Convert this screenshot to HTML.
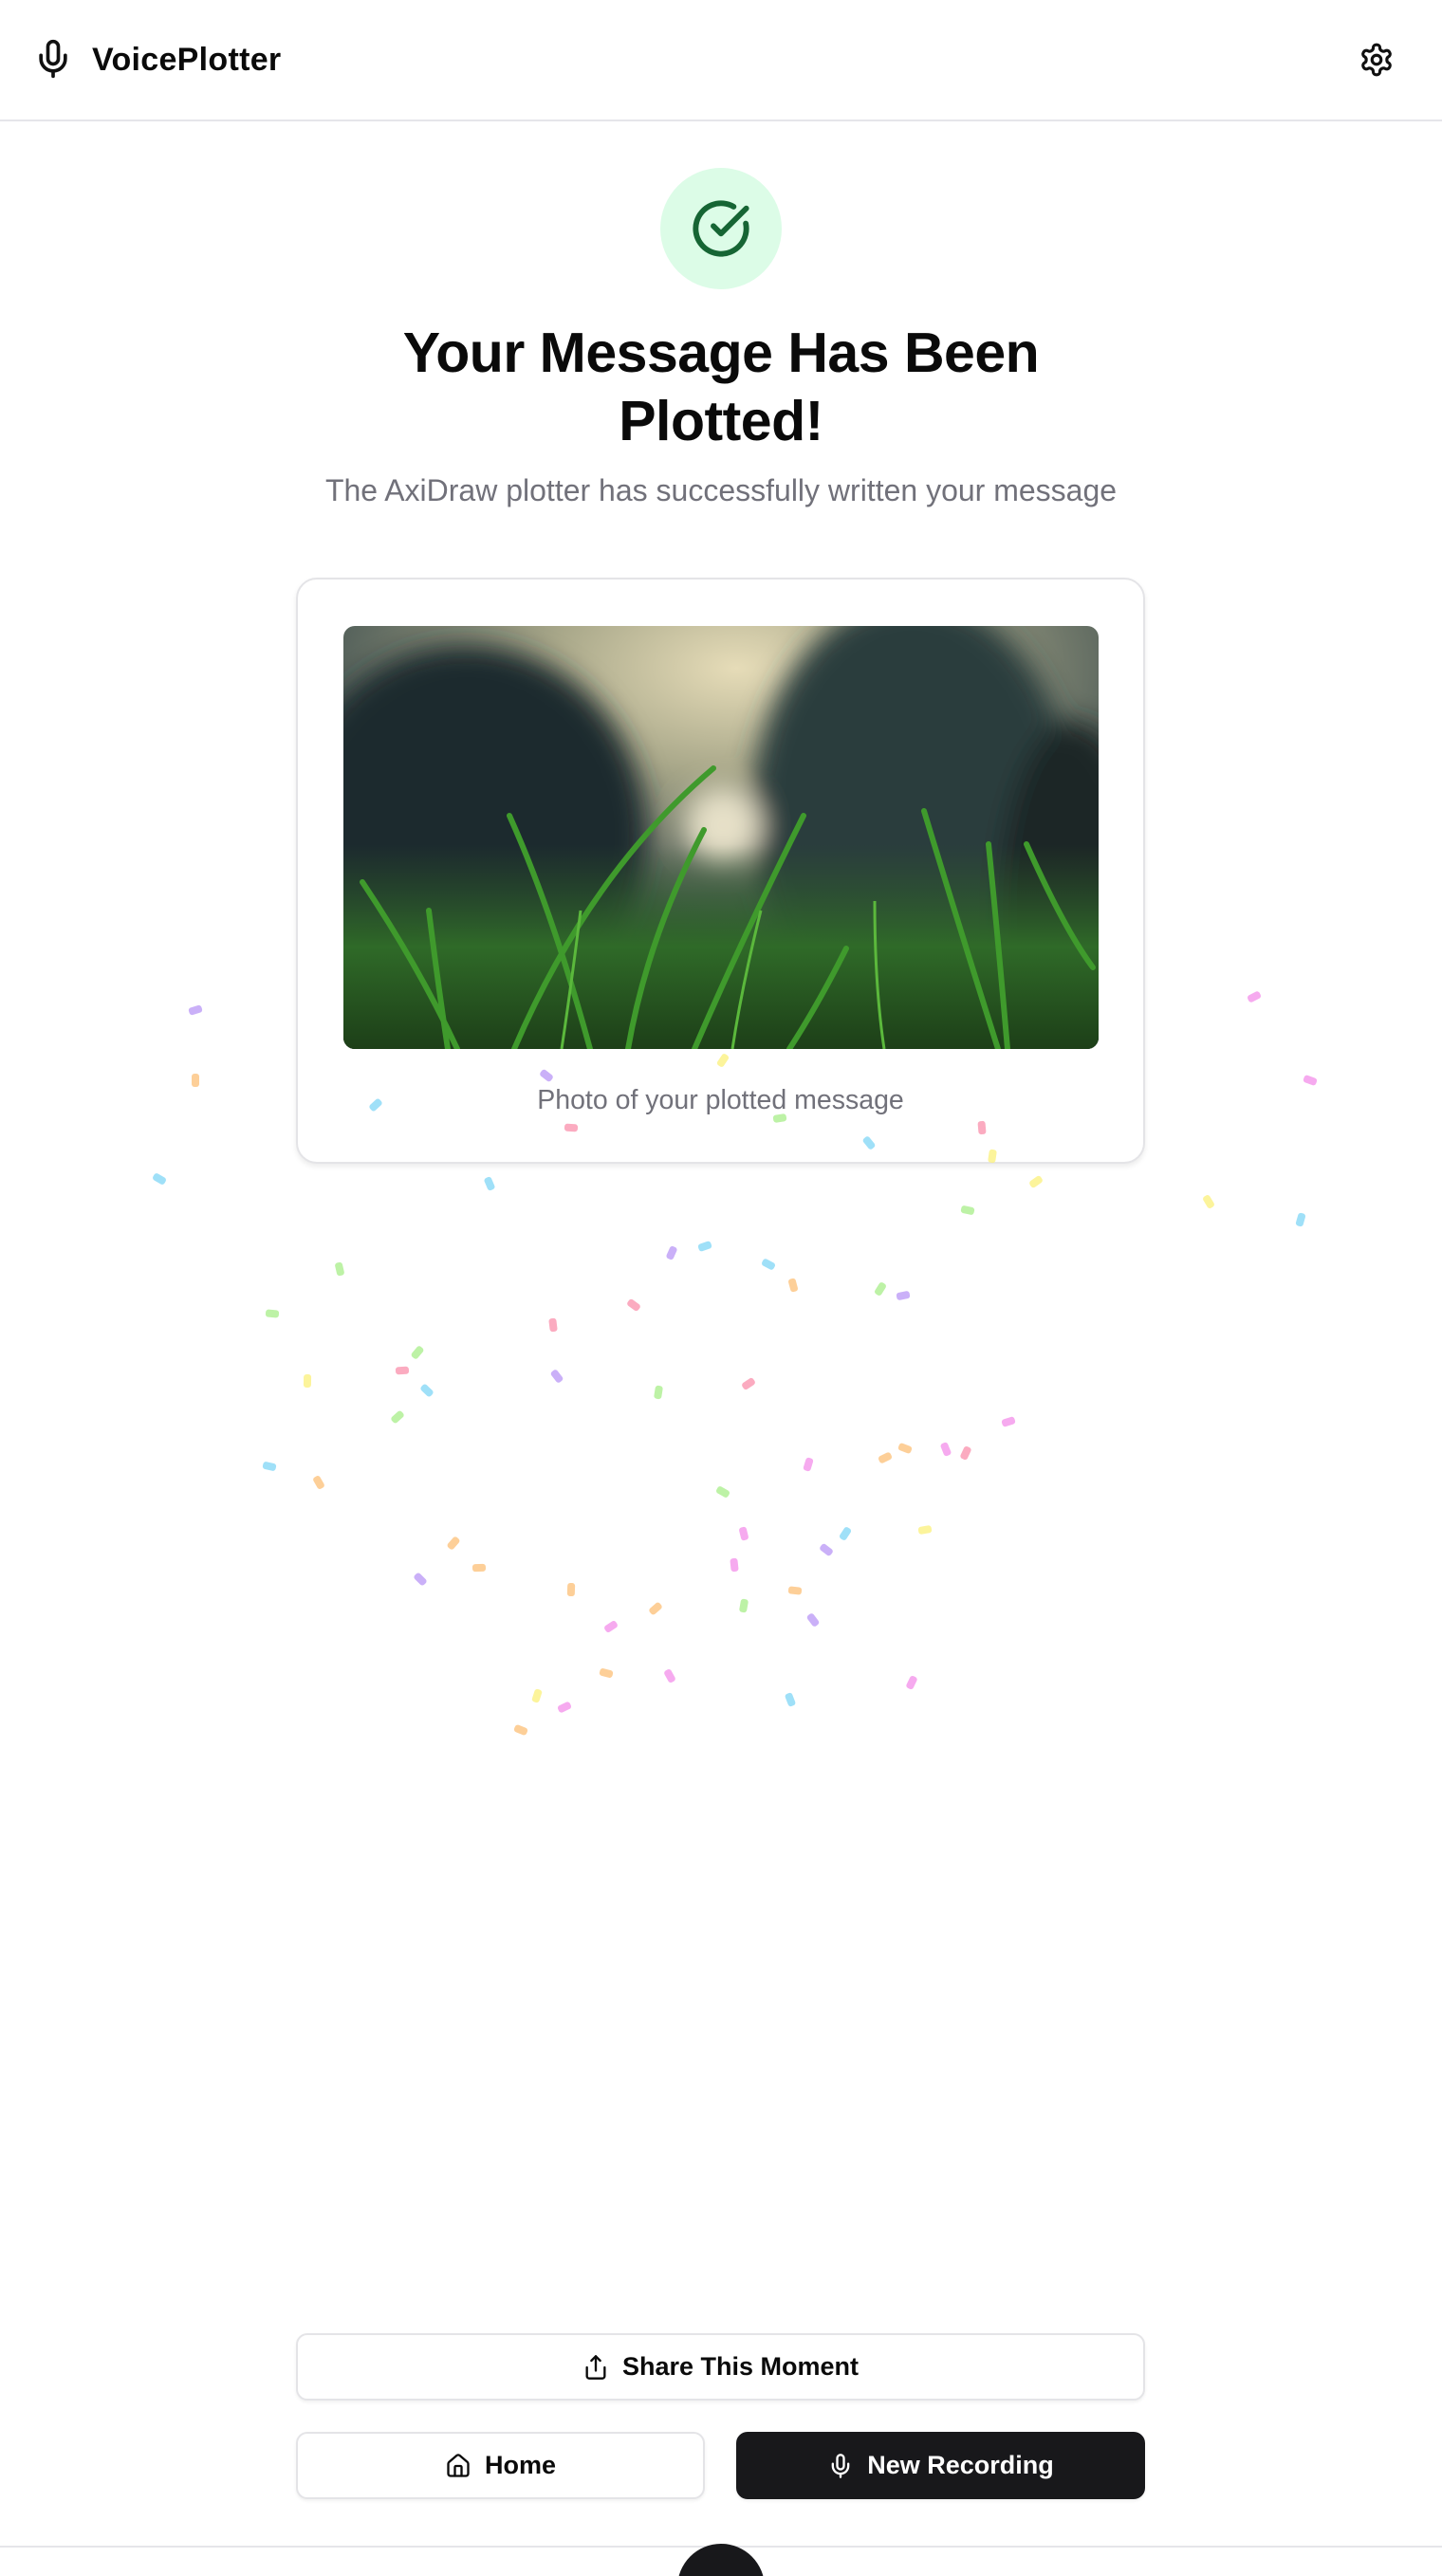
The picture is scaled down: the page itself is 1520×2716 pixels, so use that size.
<!DOCTYPE html>
<html><head><meta charset="utf-8"><style>
*{box-sizing:border-box;margin:0;padding:0}
html,body{width:1520px;height:2716px;overflow:hidden;background:#fff;font-family:"Liberation Sans",sans-serif;color:#0a0a0a;position:relative}
.hdr{position:absolute;left:0;top:0;width:1520px;height:128px;border-bottom:2px solid #e5e5ea}
.logo{position:absolute;left:97px;top:44px;font-size:34px;font-weight:bold;letter-spacing:0.3px}
.ic{position:absolute;fill:none;stroke:currentColor;stroke-width:2;stroke-linecap:round;stroke-linejoin:round}
.check{position:absolute;left:696px;top:177px;width:128px;height:128px;border-radius:50%;background:#dcfce7}
h1{position:absolute;left:0;width:1520px;text-align:center;font-size:59px;line-height:72px;font-weight:bold;top:336px;letter-spacing:-0.5px}
.sub{position:absolute;left:0;width:1520px;top:499px;text-align:center;font-size:32px;color:#71717a}
.card{position:absolute;left:312px;top:609px;width:895px;height:618px;border:2px solid #e4e4e7;border-radius:22px;box-shadow:0 3px 6px rgba(0,0,0,.08);background:#fff}
.img{position:absolute;left:48px;top:49px;width:796px;height:446px;border-radius:12px;overflow:hidden}
.cap{position:absolute;left:0;width:100%;top:533px;text-align:center;font-size:28.5px;color:#71717a}
.btn{position:absolute;height:71px;border:2px solid #e4e4e7;border-radius:12px;background:#fff;box-shadow:0 2px 3px rgba(0,0,0,.06);font-size:27px;font-weight:bold;display:flex;align-items:center;justify-content:center;gap:14px}
.btn.dark{background:#18181b;color:#fff;border-color:#18181b}
.c{position:absolute;width:8px;height:14px;border-radius:3px;opacity:.75}
</style></head><body>
<div class="hdr">
<svg class="ic" style="left:34px;top:40px;color:#111" width="44" height="44" viewBox="0 0 24 24"><path d="M12 2a3 3 0 0 0-3 3v7a3 3 0 0 0 6 0V5a3 3 0 0 0-3-3z"/><path d="M19 10v2a7 7 0 0 1-14 0v-2"/><line x1="12" y1="19" x2="12" y2="22"/></svg>
<div class="logo">VoicePlotter</div>
<svg class="ic" style="left:1432px;top:44px;color:#111" width="38" height="38" viewBox="0 0 24 24"><path d="M12.22 2h-.44a2 2 0 0 0-2 2v.18a2 2 0 0 1-1 1.730l-.43.25a2 2 0 0 1-2 0l-.15-.08a2 2 0 0 0-2.73.73l-.22.38a2 2 0 0 0 .73 2.730l.15.1a2 2 0 0 1 1 1.72v.51a2 2 0 0 1-1 1.74l-.15.09a2 2 0 0 0-.73 2.73l.22.38a2 2 0 0 0 2.73.73l.15-.08a2 2 0 0 1 2 0l.43.25a2 2 0 0 1 1 1.73V20a2 2 0 0 0 2 2h.44a2 2 0 0 0 2-2v-.18a2 2 0 0 1 1-1.73l.43-.25a2 2 0 0 1 2 0l.15.08a2 2 0 0 0 2.73-.73l.22-.39a2 2 0 0 0-.73-2.73l-.15-.08a2 2 0 0 1-1-1.74v-.5a2 2 0 0 1 1-1.74l.15-.09a2 2 0 0 0 .73-2.73l-.22-.38a2 2 0 0 0-2.73-.73l-.15.08a2 2 0 0 1-2 0l-.43-.25a2 2 0 0 1-1-1.73V4a2 2 0 0 0-2-2z"/><circle cx="12" cy="12" r="3"/></svg>
</div>
<div class="check"><svg class="ic" style="left:32px;top:32px;color:#166534;stroke-width:2.2" width="64" height="64" viewBox="0 0 24 24"><path d="M21.8 10A10 10 0 1 1 17 3.34"/><path d="m9 11 3 3L22 4"/></svg></div>
<h1>Your Message Has Been<br>Plotted!</h1>
<div class="sub">The AxiDraw plotter has successfully written your message</div>
<div class="card">
<div class="img"><svg width="796" height="446" viewBox="0 0 796 446">
<defs>
<radialGradient id="sky" cx="0.52" cy="0.1" r="0.7"><stop offset="0" stop-color="#e6dcb8"/><stop offset="0.35" stop-color="#a9a88a"/><stop offset="0.8" stop-color="#4c5a56"/><stop offset="1" stop-color="#2d3a3a"/></radialGradient>
<linearGradient id="gr" x1="0" y1="0" x2="0" y2="1"><stop offset="0" stop-color="#2f5a2a" stop-opacity="0"/><stop offset="0.5" stop-color="#2f6a28"/><stop offset="1" stop-color="#1d3f18"/></linearGradient>
<filter id="b"><feGaussianBlur stdDeviation="14"/></filter>
</defs>
<rect width="796" height="446" fill="url(#sky)"/>
<g filter="url(#b)">
<ellipse cx="130" cy="220" rx="190" ry="200" fill="#1e2c2e"/>
<ellipse cx="600" cy="200" rx="170" ry="230" fill="#2c3c3c"/>
<ellipse cx="770" cy="300" rx="80" ry="200" fill="#1a2626"/>
<ellipse cx="400" cy="210" rx="40" ry="40" fill="#e6e0c8"/>
<ellipse cx="40" cy="430" rx="120" ry="100" fill="#0e1810"/>
</g>
<rect y="230" width="796" height="216" fill="url(#gr)"/>
<g stroke="#3f9a2c" stroke-width="6" fill="none" stroke-linecap="round">
<path d="M20 270 Q80 360 120 446"/><path d="M175 200 Q220 300 260 446"/><path d="M390 150 Q260 260 180 446"/><path d="M380 215 Q320 330 300 446"/><path d="M485 200 Q420 330 370 446"/><path d="M612 195 Q650 320 690 446"/><path d="M720 230 Q760 320 790 360"/><path d="M530 340 Q500 400 470 446"/><path d="M90 300 Q100 380 110 446"/><path d="M680 230 Q690 330 700 446"/>
</g>
<g stroke="#5bb83c" stroke-width="3" fill="none"><path d="M250 300 Q240 380 230 446"/><path d="M560 290 Q560 380 570 446"/><path d="M440 300 Q420 380 410 446"/></g>
</svg></div>
<div class="cap">Photo of your plotted message</div>
</div>
<div class="btn" style="left:312px;top:2460px;width:895px"><svg class="ic" style="position:static" width="28" height="28" viewBox="0 0 24 24"><path d="M4 12v8a2 2 0 0 0 2 2h12a2 2 0 0 0 2-2v-8"/><polyline points="16 6 12 2 8 6"/><line x1="12" y1="2" x2="12" y2="15"/></svg>Share This Moment</div>
<div class="btn" style="left:312px;top:2564px;width:431px"><svg class="ic" style="position:static" width="28" height="28" viewBox="0 0 24 24"><path d="M15 21v-8a1 1 0 0 0-1-1h-4a1 1 0 0 0-1 1v8"/><path d="M3 10a2 2 0 0 1 .7-1.5l7-6a2 2 0 0 1 2.6 0l7 6A2 2 0 0 1 21 10v9a2 2 0 0 1-2 2H5a2 2 0 0 1-2-2z"/></svg>Home</div>
<div class="btn dark" style="left:776px;top:2564px;width:431px"><svg class="ic" style="position:static" width="28" height="28" viewBox="0 0 24 24"><path d="M12 2a3 3 0 0 0-3 3v7a3 3 0 0 0 6 0V5a3 3 0 0 0-3-3z"/><path d="M19 10v2a7 7 0 0 1-14 0v-2"/><line x1="12" y1="19" x2="12" y2="22"/></svg>New Recording</div>
<div style="position:absolute;left:0;top:2684px;width:1520px;height:2px;background:#e5e5ea"></div>
<div style="position:absolute;left:714px;top:2682px;width:92px;height:92px;border-radius:50%;background:#18181b"></div>
<div id="conf"></div>
<script>
var pts=[[119,658,0],[229,673,1],[348,687,2],[529,696,1],[604,704,3],[631,720,3],[589,737,4],[736,732,3],[792,743,1],[764,607,6],[798,658,6],[298,721,1],[409,763,5],[429,759,1],[468,770,1],[483,783,0],[536,785,4],[550,789,5],[386,795,2],[337,807,2],[254,824,4],[245,835,2],[260,847,1],[187,841,3],[242,863,4],[166,800,4],[339,838,5],[401,848,4],[456,843,2],[164,893,1],[194,903,0],[492,892,6],[539,888,0],[551,882,0],[576,883,6],[588,885,2],[614,866,6],[440,909,4],[453,934,6],[515,934,1],[563,932,3],[503,944,5],[447,953,6],[276,940,0],[292,955,0],[256,962,5],[348,968,0],[399,980,0],[484,969,0],[495,987,5],[453,978,4],[372,991,6],[369,1019,0],[408,1021,6],[327,1033,3],[344,1040,6],[317,1054,0],[481,1035,1],[555,1025,6],[119,615,5],[97,718,1],[207,773,4],[440,646,3],[475,681,4],[333,655,5],[598,687,2]];
var cols=["#fcbf75","#7fd6f5","#f98fab","#fbf07a","#a7ee88","#b896f5","#f38ee9"];
var h="";pts.forEach(function(p,i){var r=(i*47)%180;h+='<div class="c" style="left:'+Math.round(p[0]*1.731-4)+'px;top:'+Math.round(p[1]*1.731-7)+'px;background:'+cols[p[2]]+';transform:rotate('+r+'deg)"></div>';});
document.getElementById("conf").innerHTML=h;
</script>
</body></html>
